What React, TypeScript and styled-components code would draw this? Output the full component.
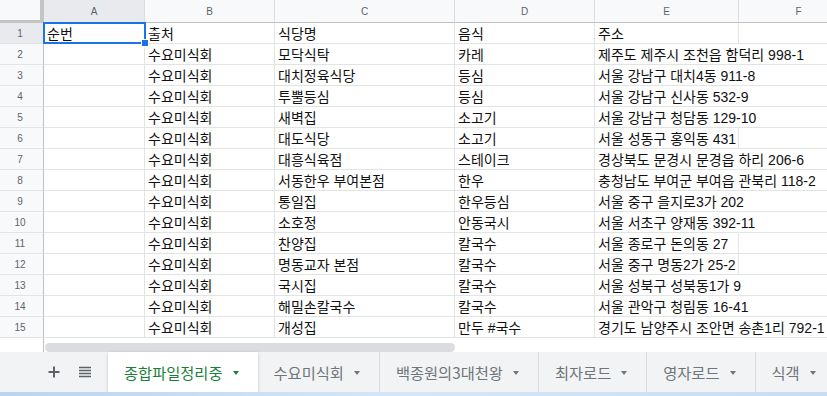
import React from "react";
import styled, { createGlobalStyle, css } from "styled-components";

const GlobalStyle = createGlobalStyle`
  html, body { margin: 0; padding: 0; background: #ffffff; overflow: hidden; }
  * { box-sizing: border-box; }
`;

const FONT = `"Liberation Sans", "Noto Sans CJK KR", Arial, sans-serif`;

const Page = styled.div`
  width: 827px;
  height: 396px;
  overflow: hidden;
  display: flex;
  flex-direction: column;
  font-family: ${FONT};
  position: relative;
`;

const Grid = styled.div`
  display: flex;
  flex-direction: column;
  position: relative;
`;

const HeaderRow = styled.div`
  display: flex;
  height: 23px;
  flex: none;
`;

const Corner = styled.div`
  width: 44px;
  height: 23px;
  flex: none;
  background: #f8f9fa;
  border-right: 4px solid #c4c4c4;
  border-bottom: 3px solid #c4c4c4;
`;

const ColHeader = styled.div<{ $w: number; $sel?: boolean }>`
  width: ${(p) => p.$w}px;
  flex: none;
  height: 23px;
  display: flex;
  align-items: center;
  justify-content: center;
  font-size: 10px;
  color: #5f6368;
  background: ${(p) => (p.$sel ? "#e8eaed" : "#f8f9fa")};
  border-right: 1px solid #dadce0;
  border-bottom: 1px solid #c0c0c0;
  padding-top: 1px;
`;

const Row = styled.div`
  display: flex;
  height: 21px;
  flex: none;
`;

const RowHeader = styled.div<{ $sel?: boolean }>`
  width: 44px;
  flex: none;
  display: flex;
  align-items: center;
  justify-content: center;
  font-size: 10px;
  color: #5f6368;
  background: ${(p) => (p.$sel ? "#e8eaed" : "#f8f9fa")};
  border-right: 1px solid #c0c0c0;
  border-bottom: 1px solid #e2e3e3;
  padding-right: 3px;
`;

const Cell = styled.div<{ $w: number; $spill?: boolean; $open?: boolean }>`
  width: ${(p) => p.$w}px;
  flex: none;
  display: flex;
  align-items: center;
  padding: 0 3px;
  font-size: 14px;
  color: #111111;
  white-space: nowrap;
  border-bottom: 1px solid #e2e3e3;
  border-right: 1px solid ${(p) => (p.$open ? "transparent" : "#e2e3e3")};
  overflow: ${(p) => (p.$spill ? "visible" : "hidden")};
  position: relative;
  z-index: ${(p) => (p.$spill ? 1 : 0)};
`;

const Selection = styled.div`
  position: absolute;
  left: 43px;
  top: 22px;
  width: 103px;
  height: 22px;
  border: 2px solid #1a73e8;
  pointer-events: none;
  z-index: 3;
`;

const FillHandle = styled.div`
  position: absolute;
  right: -5px;
  bottom: -5px;
  width: 8px;
  height: 8px;
  background: #1a73e8;
  border: 1px solid #ffffff;
`;

const ScrollRow = styled.div`
  display: flex;
  height: 14px;
  flex: none;
`;

const ScrollGutter = styled.div`
  width: 44px;
  flex: none;
  background: #ffffff;
  border-right: 1px solid #c0c0c0;
`;

const ScrollTrack = styled.div`
  flex: 1;
  padding: 5px 0 0 1px;
  background: #ffffff;
`;

const ScrollThumb = styled.div`
  width: 410px;
  height: 9px;
  border-radius: 5px;
  background: #dadce0;
`;

const TabBar = styled.div`
  display: flex;
  height: 40px;
  flex: none;
  background: #f1f3f4;
  color: #5f6368;
`;

const Tools = styled.div`
  width: 108px;
  flex: none;
  display: flex;
  align-items: center;
  padding-left: 48px;
  gap: 19px;
`;

const ToolIcon = styled.svg`
  display: block;
  fill: none;
  stroke: #5f6368;
`;

const Tab = styled.div<{ $active?: boolean }>`
  flex: none;
  display: flex;
  align-items: center;
  padding: 0 19px 0 16px;
  gap: 10px;
  font-family: "Noto Sans CJK KR", ${FONT};
  font-size: 15.3px;
  white-space: nowrap;
  ${(p) =>
    p.$active
      ? css`
          background: #ffffff;
          color: #188038;
          box-shadow: 0 1px 3px rgba(60, 64, 67, 0.25);
        `
      : css`
          color: #70757a;
          border-right: 1px solid #dadce0;
        `}
`;

const Caret = styled.span`
  width: 0;
  height: 0;
  border-left: 3.5px solid transparent;
  border-right: 3.5px solid transparent;
  border-top: 4px solid currentColor;
  margin-top: 1px;
`;

const TaskStrip = styled.div`
  height: 4px;
  flex: none;
  background: linear-gradient(90deg, #bcd4ef, #d6e6f7 50%, #c9dcf2);
`;

const cols = [
  { key: "A", w: 101 },
  { key: "B", w: 130 },
  { key: "C", w: 180 },
  { key: "D", w: 140 },
  { key: "E", w: 144 },
  { key: "F", w: 120 },
];

type RowData = { a: string; b: string; c: string; d: string; e: string; spill?: boolean };

const rows: RowData[] = [
  { a: "순번", b: "출처", c: "식당명", d: "음식", e: "주소" },
  { a: "", b: "수요미식회", c: "모닥식탁", d: "카레", e: "제주도 제주시 조천읍 함덕리 998-1", spill: true },
  { a: "", b: "수요미식회", c: "대치정육식당", d: "등심", e: "서울 강남구 대치4동 911-8", spill: true },
  { a: "", b: "수요미식회", c: "투뿔등심", d: "등심", e: "서울 강남구 신사동 532-9", spill: true },
  { a: "", b: "수요미식회", c: "새벽집", d: "소고기", e: "서울 강남구 청담동 129-10", spill: true },
  { a: "", b: "수요미식회", c: "대도식당", d: "소고기", e: "서울 성동구 홍익동 431" },
  { a: "", b: "수요미식회", c: "대흥식육점", d: "스테이크", e: "경상북도 문경시 문경읍 하리 206-6", spill: true },
  { a: "", b: "수요미식회", c: "서동한우 부여본점", d: "한우", e: "충청남도 부여군 부여읍 관북리 118-2", spill: true },
  { a: "", b: "수요미식회", c: "통일집", d: "한우등심", e: "서울 중구 을지로3가 202", spill: true },
  { a: "", b: "수요미식회", c: "소호정", d: "안동국시", e: "서울 서초구 양재동 392-11", spill: true },
  { a: "", b: "수요미식회", c: "찬양집", d: "칼국수", e: "서울 종로구 돈의동 27" },
  { a: "", b: "수요미식회", c: "명동교자 본점", d: "칼국수", e: "서울 중구 명동2가 25-2" },
  { a: "", b: "수요미식회", c: "국시집", d: "칼국수", e: "서울 성북구 성북동1가 9", spill: true },
  { a: "", b: "수요미식회", c: "해밀손칼국수", d: "칼국수", e: "서울 관악구 청림동 16-41", spill: true },
  { a: "", b: "수요미식회", c: "개성집", d: "만두 #국수", e: "경기도 남양주시 조안면 송촌1리 792-1", spill: true },
];

const tabs = ["종합파일정리중", "수요미식회", "백종원의3대천왕", "최자로드", "영자로드", "식객"];

export default function App() {
  return (
    <>
      <GlobalStyle />
      <Page>
        <Grid>
          <HeaderRow>
            <Corner />
            {cols.map((c) => (
              <ColHeader key={c.key} $w={c.w} $sel={c.key === "A"}>
                {c.key}
              </ColHeader>
            ))}
          </HeaderRow>
          {rows.map((r, i) => (
            <Row key={i}>
              <RowHeader $sel={i === 0}>{i + 1}</RowHeader>
              <Cell $w={cols[0].w}>{r.a}</Cell>
              <Cell $w={cols[1].w}>{r.b}</Cell>
              <Cell $w={cols[2].w}>{r.c}</Cell>
              <Cell $w={cols[3].w}>{r.d}</Cell>
              <Cell $w={cols[4].w} $spill $open={r.spill}>
                {r.e}
              </Cell>
              <Cell $w={cols[5].w} />
            </Row>
          ))}
          <Selection>
            <FillHandle />
          </Selection>
        </Grid>
        <ScrollRow>
          <ScrollGutter />
          <ScrollTrack>
            <ScrollThumb />
          </ScrollTrack>
        </ScrollRow>
        <TabBar>
          <Tools>
            <ToolIcon width="12" height="12" viewBox="0 0 12 12" strokeWidth="2">
              <path d="M6 0.5v11M0.5 6h11" />
            </ToolIcon>
            <ToolIcon width="12" height="12" viewBox="0 0 12 12" strokeWidth="1.6">
              <path d="M0 1.5h12M0 4.5h12M0 7.5h12M0 10.5h12" />
            </ToolIcon>
          </Tools>
          {tabs.map((t, i) => (
            <Tab key={t} $active={i === 0}>
              {t}
              <Caret />
            </Tab>
          ))}
        </TabBar>
        <TaskStrip />
      </Page>
    </>
  );
}
